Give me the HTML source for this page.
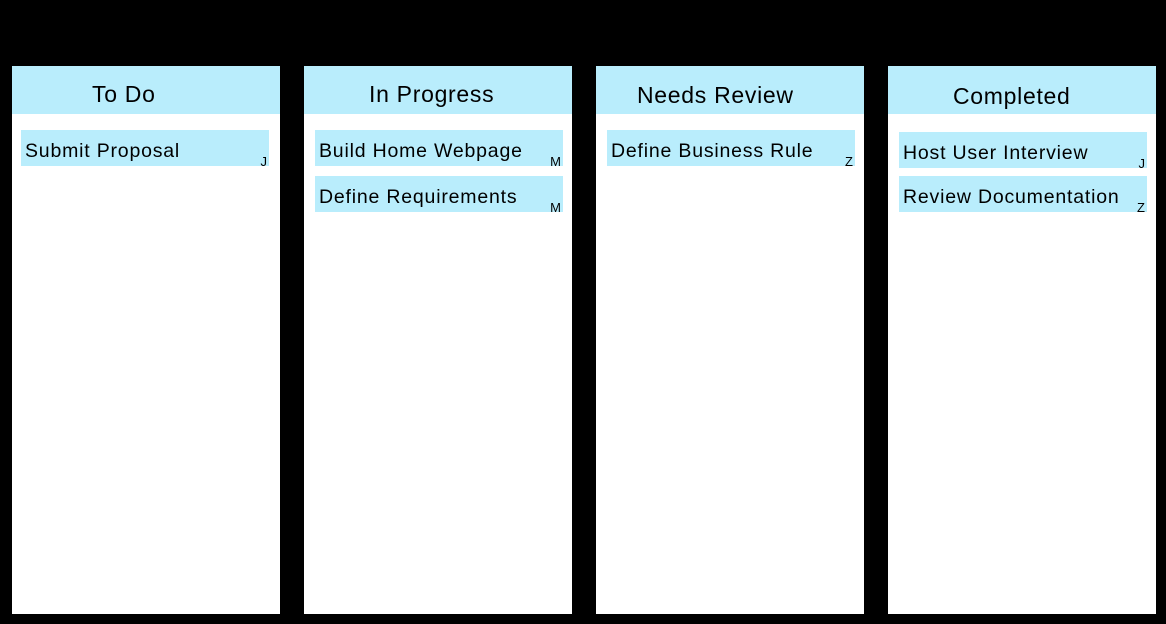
<!DOCTYPE html>
<html><head><style>
body{margin:0;width:1166px;height:624px;background:#000;position:relative;overflow:hidden;font-family:"Liberation Sans",sans-serif;color:#000}
.col{position:absolute;top:66px;width:268px;height:548px;background:#fff}
.hd{position:absolute;left:0;top:0;width:268px;height:48px;background:#b9edfc}
.ht{position:absolute;font-size:23px;white-space:nowrap;letter-spacing:0.7px}
.card{position:absolute;left:9px;width:248px;height:36px;background:#b9edfc}
.ct{position:absolute;left:4px;top:10px;font-size:19.5px;white-space:nowrap;letter-spacing:0.8px}
.in{position:absolute;right:2px;bottom:-3px;font-size:13px}
</style></head><body>
<div class="col" style="left:12px"><div class="hd"><span class="ht" style="left:80px;top:15px">To Do</span></div>
<div class="card" style="top:64px"><span class="ct">Submit Proposal</span><span class="in">J</span></div></div>
<div class="col" style="left:304px"><div class="hd"><span class="ht" style="left:65px;top:15px">In Progress</span></div>
<div class="card" style="top:64px;left:11px"><span class="ct">Build Home Webpage</span><span class="in">M</span></div>
<div class="card" style="top:110px;left:11px"><span class="ct">Define Requirements</span><span class="in">M</span></div></div>
<div class="col" style="left:596px"><div class="hd"><span class="ht" style="left:41px;top:16px">Needs Review</span></div>
<div class="card" style="top:64px;left:11px"><span class="ct">Define Business Rule</span><span class="in">Z</span></div></div>
<div class="col" style="left:888px"><div class="hd"><span class="ht" style="left:65px;top:17px">Completed</span></div>
<div class="card" style="top:66px;left:11px"><span class="ct">Host User Interview</span><span class="in">J</span></div>
<div class="card" style="top:110px;left:11px"><span class="ct">Review Documentation</span><span class="in">Z</span></div></div>
</body></html>
